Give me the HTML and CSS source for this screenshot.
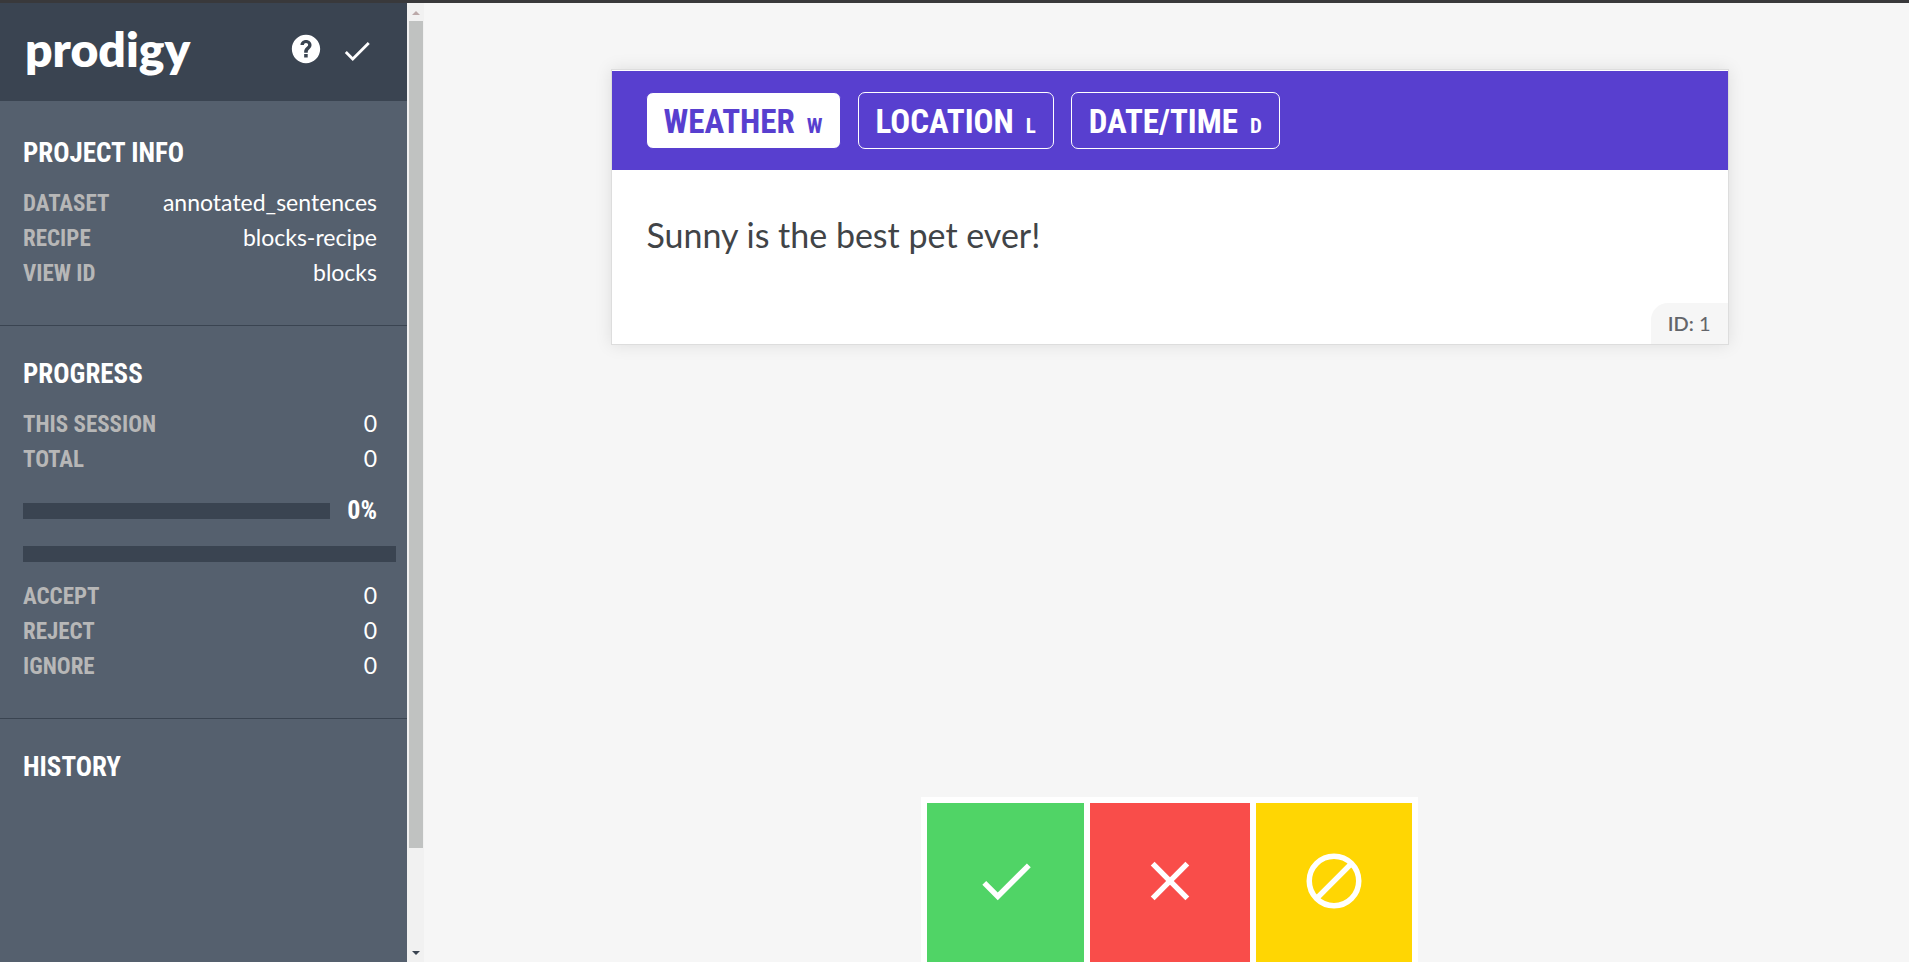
FILE: index.html
```html
<!DOCTYPE html>
<html lang="en">
<head>
<meta charset="utf-8">
<title>Prodigy</title>
<link rel="stylesheet" href="styles.css">
</head>
<body>
<div class="app">
  <aside class="sidebar">
    <header class="brand">
      <h1 class="logo">prodigy</h1>
      <div class="tools">
        <button class="tool" aria-label="Help">
          <svg viewBox="0 0 24 24"><path d="M12 2C6.480 2 2 6.480 2 12s4.480 10 10 10 10-4.480 10-10S17.520 2 12 2zm1.200 16h-2.500v-2.400h2.500V18zm1.600-6.300c-1 1-1.600 1.400-1.600 2.900h-2.500v-.6c0-1.200.5-2 1.200-2.800l1.100-1.100c.3-.3.5-.6.5-1 0-.8-.6-1.300-1.500-1.300S10.500 8.400 10.500 9.200H8.100C8.100 7.100 9.800 5.600 12 5.600s3.900 1.500 3.900 3.600c0 1-.5 1.800-1.100 2.500z"/></svg>
        </button>
        <button class="tool tool-save" aria-label="Save">
          <svg viewBox="0 0 24 24"><path d="M9 16.200L4.800 12l-1.400 1.400L9 19 21 7l-1.400-1.400L9 16.200z"/></svg>
        </button>
      </div>
    </header>
    <section class="panel panel-first">
      <h2 class="panel-title">Project Info</h2>
      <dl class="stats">
        <div class="row"><dt>Dataset</dt><dd>annotated_sentences</dd></div>
        <div class="row"><dt>Recipe</dt><dd>blocks-recipe</dd></div>
        <div class="row"><dt>View ID</dt><dd>blocks</dd></div>
      </dl>
    </section>
    <section class="panel">
      <h2 class="panel-title">Progress</h2>
      <dl class="stats">
        <div class="row"><dt>This session</dt><dd>0</dd></div>
        <div class="row"><dt>Total</dt><dd>0</dd></div>
      </dl>
      <div class="progress">
        <div class="bar"></div>
        <span class="percent">0%</span>
      </div>
      <div class="bar bar-wide"></div>
      <dl class="stats">
        <div class="row"><dt>Accept</dt><dd>0</dd></div>
        <div class="row"><dt>Reject</dt><dd>0</dd></div>
        <div class="row"><dt>Ignore</dt><dd>0</dd></div>
      </dl>
    </section>
    <section class="panel">
      <h2 class="panel-title">History</h2>
    </section>
  </aside>
  <div class="scroller" aria-hidden="true">
    <svg class="arrow arrow-up" viewBox="0 0 8 4"><path d="M0 4L4 0l4 4z"/></svg>
    <div class="track"><div class="thumb"></div></div>
    <svg class="arrow" viewBox="0 0 8 4"><path d="M0 0l4 4 4-4z"/></svg>
  </div>
  <main class="main">
    <article class="card">
      <div class="labels">
        <button class="label label-active">Weather <span class="key">W</span></button>
        <button class="label">Location <span class="key">L</span></button>
        <button class="label">Date/Time <span class="key">D</span></button>
      </div>
      <p class="sentence">Sunny is the best pet ever!</p>
      <footer class="meta"><span class="tag"><b>ID:</b> 1</span></footer>
    </article>
    <div class="actions">
      <button class="action accept" aria-label="Accept">
        <svg viewBox="0 0 24 24"><path d="M9 16.200L4.800 12l-1.400 1.400L9 19 21 7l-1.400-1.400L9 16.200z"/></svg>
      </button>
      <button class="action reject" aria-label="Reject">
        <svg viewBox="0 0 24 24"><path d="M19 6.400L17.600 5 12 10.600 6.400 5 5 6.400l5.600 5.600L5 17.600 6.400 19l5.600-5.600 5.600 5.600 1.400-1.400-5.600-5.600z"/></svg>
      </button>
      <button class="action ignore" aria-label="Ignore">
        <svg viewBox="0 0 24 24"><path d="M5.700 18.300L18.300 5.700" fill="none" stroke="currentColor" stroke-width="2"/><circle cx="12" cy="12" r="9" fill="none" stroke="currentColor" stroke-width="2"/></svg>
      </button>
    </div>
  </main>
</div>
</body>
</html>
```
FILE: styles.css
```css
* { box-sizing: border-box; }
body {
  margin: 0;
  background: #f6f6f6;
  color: #414447;
  font-family: Lato, "Open Sans", sans-serif;
}
h1, h2, p, dl, dd { margin: 0; }
button { padding: 0; border: 0; background: none; color: inherit; font: inherit; cursor: pointer; }
svg { display: block; fill: currentColor; }

.app {
  display: flex;
  height: 100vh;
  border-top: 3px solid #39393b;
  overflow: hidden;
}
.sidebar {
  flex: 0 0 407px;
  background: #55606e;
  color: #fff;
  overflow: hidden;
}
.brand {
  display: flex;
  align-items: center;
  justify-content: space-between;
  height: 98px;
  padding: 0 33px 6px 25px;
  background: #3a4451;
}
.logo { font-size: 48px; line-height: 52px; font-weight: 800; }
.tools { display: flex; align-items: center; gap: 17px; }
.tool svg { width: 34px; height: 34px; }
.tool-save { padding-top: 4px; }

.panel { padding: 31px 30px 35px 23px; }
.panel + .panel { border-top: 1px solid #3a4451; }
.panel-first { padding-top: 35px; }
.panel-title, .row dt, .percent, .label {
  font-family: "Roboto Condensed", "Liberation Sans Narrow", Roboto, sans-serif;
  font-weight: 700;
  text-transform: uppercase;
}
.panel-title { font-size: 27px; line-height: 35px; margin-bottom: 14px; }
.row { display: flex; align-items: baseline; justify-content: space-between; height: 35px; line-height: 35px; }
.row dt { font-size: 23px; color: #b7b7b7; }
.row dd { font-size: 23px; }
.progress { display: flex; align-items: center; gap: 17px; margin: 17px 0 18px; }
.bar { flex: 1; height: 16px; background: #3a4451; }
.percent { font-size: 26px; line-height: 35px; }
.bar-wide { margin: 0 -19px 16px 0; }

.scroller {
  flex: 0 0 17px;
  display: flex;
  flex-direction: column;
  align-items: center;
  padding: 8px 1px 7px 2px;
  gap: 6px;
  background: #f1f1f1;
  color: #3a4451;
}
.arrow { width: 8px; height: 4px; }
.arrow-up { color: #bba9a9; }
.track { flex: 1; align-self: stretch; }
.thumb { height: 89.5%; background: #c0c2c1; }

.main {
  flex: 1;
  display: flex;
  flex-direction: column;
  justify-content: space-between;
  align-items: center;
  padding: 66px 20px 0 26px;
}
.card {
  width: 100%;
  max-width: 1118px;
  padding-top: 1px;
  background: #fff;
  border: 1px solid #ddd;
  box-shadow: 0 0 16px rgba(0, 0, 0, 0.1);
}
.labels {
  display: flex;
  gap: 17px;
  padding: 21px 34px;
  background: #583fcf;
}
.label {
  display: flex;
  align-items: baseline;
  gap: 12px;
  padding: 9px 17px 7px;
  border: 1px solid #fff;
  border-radius: 7px;
  color: #fff;
  font-size: 33px;
  line-height: 39px;
}
.label-active { background: #fff; border-color: #583fcf; color: #583fcf; }
.key { font-size: 21px; line-height: 24px; }
.sentence { padding: 39px 35px 42px; font-size: 34px; line-height: 52px; }
.meta { display: flex; justify-content: flex-end; }
.tag {
  padding: 0 17px;
  border-top-left-radius: 17px;
  background: #f6f6f6;
  color: #63656a;
  font-size: 20px;
  line-height: 41px;
}
.tag b { font-weight: 600; }
.actions {
  display: grid;
  grid-template-columns: 157px 160px 156px;
  gap: 6px;
  padding: 6px 6px 0;
  background: #fff;
}
.action { display: grid; place-items: center; height: 159px; padding-bottom: 4px; color: #fff; }
.action svg { width: 66px; height: 66px; }
.accept { background: #50d466; }
.reject { background: #f94d4a; }
.ignore { background: #ffd603; }
```
